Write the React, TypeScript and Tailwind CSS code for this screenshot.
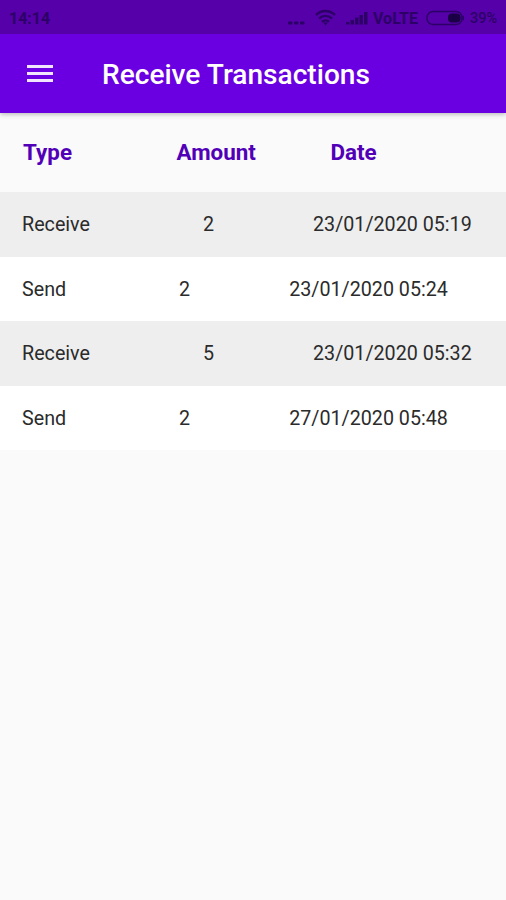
type Transaction = { type: string; amount: string; date: string };

const transactions: Transaction[] = [
  { type: "Receive", amount: "2", date: "23/01/2020 05:19" },
  { type: "Send", amount: "2", date: "23/01/2020 05:24" },
  { type: "Receive", amount: "5", date: "23/01/2020 05:32" },
  { type: "Send", amount: "2", date: "27/01/2020 05:48" },
];

function StatusBar() {
  return (
    <div className="flex h-[34px] items-center bg-[#5500a8] pt-[2px] pr-[7px] pl-[9px] text-[#2c0066]">
      <span className="pt-[2px] text-[16px] leading-none font-bold">14:14</span>
      <div className="ml-auto flex items-center">
        <svg width="17" height="18" viewBox="0 0 17 18" fill="currentColor">
          <rect x="0" y="12.5" width="4.500" height="3" rx="1" />
          <rect x="6" y="12.5" width="4.500" height="3" rx="1" />
          <rect x="12" y="12.5" width="4.500" height="3" rx="1" />
        </svg>
        <svg className="ml-[10px]" width="21" height="18" viewBox="0 0 21 18" fill="none" stroke="currentColor" strokeWidth="2.5">
          <path d="M1 6C6.500 .8 14.500 .8 20 6" />
          <path d="M4 9.500C8 6 13 6 17 9.500" />
          <path d="M7 12.700C9 11 12 11 14 12.700" />
          <path d="M8 13.500h5l-2.500 3z" fill="currentColor" stroke="none" />
        </svg>
        <svg className="ml-[10px]" width="22" height="18" viewBox="0 0 22 18" fill="currentColor">
          <rect x="0" y="13" width="3.500" height="2.500" />
          <rect x="4.500" y="11" width="3.500" height="4.500" />
          <rect x="9" y="8.500" width="3.500" height="7" />
          <rect x="13.500" y="6" width="3.500" height="9.500" />
          <rect x="18" y="3" width="3.500" height="12.500" />
        </svg>
        <span className="ml-[5px] w-[46px] pt-[2px] text-[16px] leading-none font-bold whitespace-nowrap">VoLTE</span>
        <svg className="ml-[7px]" width="38" height="16" viewBox="0 0 38 16" fill="none">
          <rect x="1" y="1.500" width="35" height="13" rx="6" stroke="currentColor" strokeWidth="1.500" />
          <rect x="22" y="3.500" width="12.500" height="9" rx="4" fill="#1a0044" />
          <rect x="36.500" y="5.500" width="1.500" height="5" rx=".75" fill="currentColor" />
        </svg>
        <span className="ml-[6px] w-[29px] pt-[2px] text-[14.500px] leading-none font-medium whitespace-nowrap">39%</span>
      </div>
    </div>
  );
}

function AppBar() {
  return (
    <header className="flex h-[79px] items-center bg-[#6a00e2] pl-[27px] text-white">
      <button aria-label="Open menu" className="flex w-[26px] flex-col gap-[4px]">
        <span className="h-[3px] w-full bg-[#f0e5fc]" />
        <span className="h-[3px] w-full bg-[#f0e5fc]" />
        <span className="h-[3px] w-full bg-[#f0e5fc]" />
      </button>
      <h1 className="ml-[49px] pt-[3px] text-[28.100px] leading-none font-medium whitespace-nowrap">Receive Transactions</h1>
    </header>
  );
}

export default function App() {
  return (
    <div className="min-h-[900px] w-full overflow-hidden bg-[#fafafa] font-['Roboto',sans-serif]">
      <div className="relative shadow-[0_1px_5px_rgba(0,0,0,0.3)]">
        <StatusBar />
        <AppBar />
      </div>
      <div className="grid h-[79px] grid-cols-[153.500px_154px_1fr] items-center pl-[23px] text-[22.400px] font-bold text-[#5200b8]">
        <span>Type</span>
        <span>Amount</span>
        <span>Date</span>
      </div>
      <div>
        {transactions.map((row) => (
          <div
            key={row.date}
            className="flex h-[64.600px] items-center pt-px pl-[22px] text-[19.700px] whitespace-nowrap text-[#2b2b2b] odd:bg-[#eeeeee] even:bg-white"
          >
            <span className="w-auto">{row.type}</span>
            <span className="ml-[113px]">{row.amount}</span>
            <span className="ml-[99px]">{row.date}</span>
          </div>
        ))}
      </div>
    </div>
  );
}
